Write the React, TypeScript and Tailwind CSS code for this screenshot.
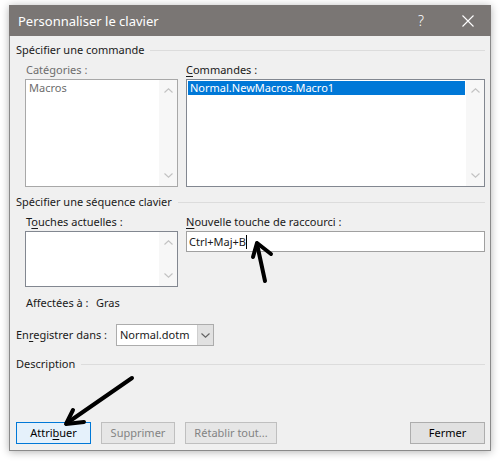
import React from "react";

const font = "font-['Noto_Sans',_'Open_Sans',_sans-serif]";

function Chevron({ up, color = "#c2c2c2" }: { up?: boolean; color?: string }) {
  return (
    <svg width="9" height="5" viewBox="0 0 9 5" fill="none">
      <path
        d={up ? "M0.5 4.5 L4.5 0.8 L8.5 4.5" : "M0.5 0.5 L4.5 4.2 L8.5 0.5"}
        stroke={color}
        strokeWidth="1.1"
      />
    </svg>
  );
}

function GroupHeader({ label }: { label: string }) {
  return (
    <div className="flex items-center h-[14px] gap-[6px]">
      <span className="whitespace-nowrap">{label}</span>
      <div className="flex-1 h-px bg-[#dcdcdc]" />
    </div>
  );
}

function ListBox({
  height,
  disabled,
  children,
}: {
  height: string;
  disabled?: boolean;
  children?: React.ReactNode;
}) {
  return (
    <div
      className={`flex border ${disabled ? "border-[#a8a8a8]" : "border-[#828790]"} bg-white ${height}`}
    >
      <div className="flex-1 p-px">{children}</div>
      <div className="w-[18px] flex flex-col items-center justify-between py-[8px] bg-[#f7f7f7]">
        <Chevron up />
        <Chevron />
      </div>
    </div>
  );
}

function Button({
  label,
  width,
  variant = "normal",
}: {
  label: React.ReactNode;
  width: string;
  variant?: "normal" | "default" | "disabled";
}) {
  const look =
    variant === "default"
      ? "border-[#0078d7] bg-[#e5f1fb] text-black"
      : variant === "disabled"
        ? "border-[#bfbfbf] bg-[#e6e6e6] text-[#838383]"
        : "border-[#adadad] bg-[#e1e1e1] text-black";
  return (
    <div className={`h-[22px] border flex items-center justify-center ${look} ${width}`}>
      {label}
    </div>
  );
}

export default function App() {
  return (
    <div className={`relative w-[500px] h-[461px] bg-white pl-[9px] pt-[5px] text-[11px] leading-[14px] text-[#1a1a1a] ${font}`}>
      <div className="w-[482px] shadow-[0_1px_8px_rgba(0,0,0,0.3)]">
        {/* title bar */}
        <div className="h-[31px] bg-[#7a7674] flex items-center pl-[9px] text-white text-[13px]">
          <span className="flex-1">Personnaliser le clavier</span>
          <span className="w-[20px] text-center mr-[31px] text-[14px] font-light">?</span>
          <svg width="12" height="12" viewBox="0 0 12 12" className="mr-[17px]">
            <path d="M0.5 0.5 L11.5 11.5 M11.5 0.5 L0.5 11.5" stroke="white" strokeWidth="1.1" />
          </svg>
        </div>

        {/* body */}
        <div className="h-[415px] bg-[#f0f0f0] border-x border-b border-[#8a8a8a] pl-[6px] pr-[5px] pt-[7px] flex flex-col">
          <GroupHeader label="Spécifier une commande" />
          <div className="flex gap-[8px] pl-[9px] mt-[6px]">
            <div className="w-[153px] flex flex-col">
              <div className="h-[14px] pl-px text-[#6d6d6d]">Catégories :</div>
              <div className="mt-[2px]">
                <ListBox height="h-[108px]" disabled>
                  <div className="pl-[2px] text-[#6d6d6d]">Macros</div>
                </ListBox>
              </div>
            </div>
            <div className="flex-1 flex flex-col">
              <div className="h-[14px]">
                <span className="underline underline-offset-2">C</span>ommandes :
              </div>
              <div className="mt-[2px]">
                <ListBox height="h-[108px]">
                  <div className="bg-[#0078d7] text-white h-[14px] pl-[2px]">Normal.NewMacros.Macro1</div>
                </ListBox>
              </div>
            </div>
          </div>

          <div className="mt-[8px]">
            <GroupHeader label="Spécifier une séquence clavier" />
          </div>
          <div className="flex gap-[8px] pl-[9px] mt-[6px]">
            <div className="w-[153px] flex flex-col">
              <div className="h-[14px] pl-px">
                T<span className="underline underline-offset-2">o</span>uches actuelles :
              </div>
              <div className="mt-[2px]">
                <ListBox height="h-[56px]" />
              </div>
            </div>
            <div className="flex-1 flex flex-col">
              <div className="h-[14px]">
                <span className="underline underline-offset-2">N</span>ouvelle touche de raccourci :
              </div>
              <div className="mt-[2px] h-[21px] border border-[#a0a0a0] bg-white flex items-center pl-[2px]">
                <span>Ctrl+Maj+B</span>
                <span className="w-px h-[14px] bg-black" />
              </div>
            </div>
          </div>

          <div className="flex h-[14px] mt-[9px] pl-[10px]">
            <span className="w-[70px]">Affectées à :</span>
            <span>Gras</span>
          </div>

          <div className="flex items-center mt-[14px] h-[22px]">
            <span className="w-[100px]">
              En<span className="underline underline-offset-2">r</span>egistrer dans :
            </span>
            <div className="w-[98px] h-[22px] border border-[#acacac] bg-white flex">
              <span className="flex-1 flex items-center pl-[3px]">Normal.dotm</span>
              <div className="w-[16px] bg-[#e1e1e1] border-l border-[#cfcfcf] flex items-center justify-center">
                <Chevron color="#606060" />
              </div>
            </div>
          </div>

          <div className="mt-[11px]">
            <GroupHeader label="Description" />
          </div>

          <div className="flex-1" />
          <div className="flex items-center gap-[10px] mb-[6px]">
            <Button
              variant="default"
              width="w-[75px]"
              label={
                <span>
                  Attri<span className="underline underline-offset-2">b</span>uer
                </span>
              }
            />
            <Button variant="disabled" width="w-[74px]" label="Supprimer" />
            <Button variant="disabled" width="w-[92px]" label="Rétablir tout..." />
            <div className="flex-1" />
            <Button width="w-[75px]" label="Fermer" />
          </div>
        </div>
      </div>

      {/* hand-drawn pointers */}
      <svg
        className="absolute left-0 top-0 pointer-events-none"
        width="500"
        height="461"
        viewBox="0 0 500 461"
        fill="none"
      >
        <g stroke="black" strokeWidth="4" strokeLinecap="round" strokeLinejoin="round">
          <path d="M265 281 L257 244" />
          <path d="M253 257 L257 243 L271 254" />
          <path d="M132 378 L67 423" />
          <path d="M73 410 L66 424 L84 422" />
        </g>
      </svg>
    </div>
  );
}
